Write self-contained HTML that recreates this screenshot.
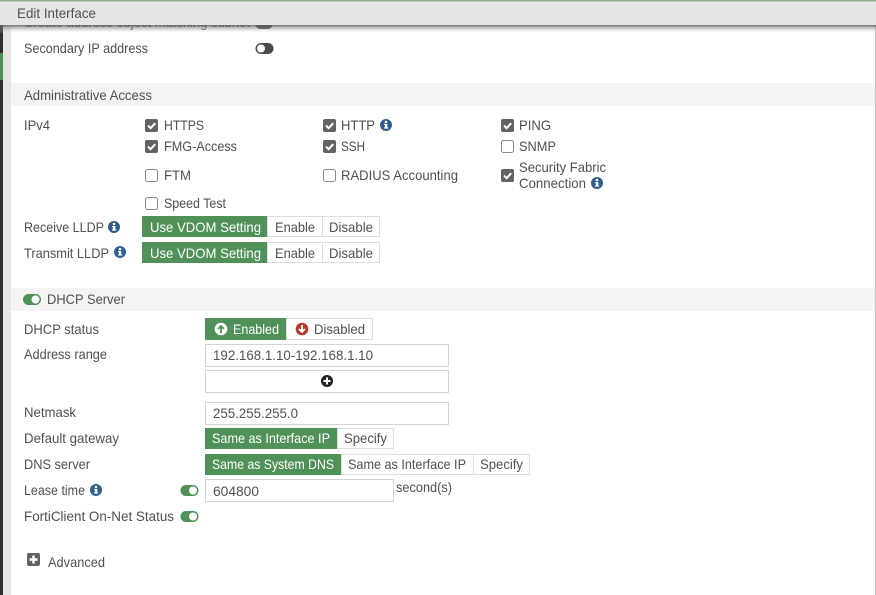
<!DOCTYPE html>
<html><head><meta charset="utf-8"><style>
html,body{margin:0;padding:0;width:876px;height:595px;overflow:hidden;background:#fff}
svg{display:block;filter:blur(.3px)}
text{font-family:"Liberation Sans",sans-serif;font-size:14px;fill:#505050}
.w{fill:#fff}
</style></head><body>
<svg width="876" height="595" viewBox="0 0 876 595" xmlns="http://www.w3.org/2000/svg">
<defs>
<linearGradient id="sh" x1="0" y1="0" x2="0" y2="1"><stop offset="0" stop-color="#555" stop-opacity=".85"/><stop offset=".35" stop-color="#888" stop-opacity=".45"/><stop offset="1" stop-color="#fff" stop-opacity="0"/></linearGradient>
<g id="on"><rect x="0" y="0" width="18" height="11" rx="5.500" fill="#4f9158"/><circle cx="12.500" cy="5.500" r="4" fill="#fff"/></g>
<g id="ck"><rect x="0" y="0" width="13" height="13" rx="2" fill="#636363"/><path d="M3 6.600l2.600 2.600L10.200 4.200" fill="none" stroke="#fff" stroke-width="2"/></g>
<g id="un"><rect x=".5" y=".5" width="12" height="12" rx="2" fill="#fff" stroke="#8a8a8a"/></g>
<g id="in"><circle cx="0" cy="0" r="6" fill="#2f5f8f"/><rect x="-1.100" y="-1" width="2.400" height="4.400" fill="#fff"/><rect x="-2" y="2.400" width="4.200" height="1.200" fill="#fff"/><rect x="-2" y="-1" width="2" height="1.100" fill="#fff"/><circle cx="0" cy="-3" r="1.300" fill="#fff"/></g>
</defs>

<!-- left edge -->
<rect x="0" y="0" width="3" height="595" fill="#2e2e2e"/>
<rect x="0" y="53" width="3" height="27" fill="#4f9158"/>
<rect x="3" y="0" width="8" height="595" fill="#e6e6e6"/>
<rect x="875" y="25" width="1" height="570" fill="#c4c4c4"/>

<!-- clipped row -->
<text x="24" y="27" textLength="226" lengthAdjust="spacingAndGlyphs" fill="#333">Create address object matching subnet</text>
<rect x="255" y="18" width="18" height="11" rx="5.500" fill="#444"/>

<!-- header -->
<rect x="0" y="25" width="876" height="9" fill="url(#sh)"/>
<rect x="0" y="0" width="876" height="25" fill="#e5e5e5"/>
<rect x="0" y="0" width="876" height="1.500" fill="#8fae92"/>
<text x="17" y="18" textLength="79" lengthAdjust="spacingAndGlyphs">Edit Interface</text>

<!-- secondary ip -->
<text x="24" y="53" textLength="124" lengthAdjust="spacingAndGlyphs">Secondary IP address</text>
<rect x="255.500" y="43" width="18" height="11" rx="5.500" fill="#4a4a4a"/><circle cx="261" cy="48.500" r="4" fill="#fff"/>

<!-- admin access -->
<rect x="11" y="83" width="864" height="23" fill="#f4f4f4"/>
<text x="24" y="100" textLength="128" lengthAdjust="spacingAndGlyphs">Administrative Access</text>
<text x="24" y="130" textLength="26" lengthAdjust="spacingAndGlyphs">IPv4</text>

<use href="#ck" x="145" y="119"/><text x="164" y="130" textLength="40" lengthAdjust="spacingAndGlyphs">HTTPS</text>
<use href="#ck" x="145" y="140"/><text x="164" y="151" textLength="73" lengthAdjust="spacingAndGlyphs">FMG-Access</text>
<use href="#un" x="145" y="169"/><text x="164" y="180" textLength="27" lengthAdjust="spacingAndGlyphs">FTM</text>
<use href="#un" x="145" y="197"/><text x="164" y="208" textLength="62" lengthAdjust="spacingAndGlyphs">Speed Test</text>

<use href="#ck" x="323" y="119"/><text x="341" y="130" textLength="34" lengthAdjust="spacingAndGlyphs">HTTP</text><use href="#in" x="386" y="125"/>
<use href="#ck" x="323" y="140"/><text x="341" y="151" textLength="24" lengthAdjust="spacingAndGlyphs">SSH</text>
<use href="#un" x="323" y="169"/><text x="341" y="180" textLength="117" lengthAdjust="spacingAndGlyphs">RADIUS Accounting</text>

<use href="#ck" x="501" y="119"/><text x="519" y="130" textLength="32" lengthAdjust="spacingAndGlyphs">PING</text>
<use href="#un" x="501" y="140"/><text x="519" y="151" textLength="37" lengthAdjust="spacingAndGlyphs">SNMP</text>
<use href="#ck" x="501" y="169"/><text x="519" y="172" textLength="87" lengthAdjust="spacingAndGlyphs">Security Fabric</text><text x="519" y="188" textLength="67" lengthAdjust="spacingAndGlyphs">Connection</text><use href="#in" x="597" y="183"/>

<!-- LLDP -->
<text x="24" y="232" textLength="80" lengthAdjust="spacingAndGlyphs">Receive LLDP</text><use href="#in" x="114" y="227"/>
<rect x="142" y="216" width="125" height="21" fill="#4f9158"/>
<rect x="267.500" y="216.500" width="55" height="20" fill="#fff" stroke="#ddd"/><rect x="322.500" y="216.500" width="57" height="20" fill="#fff" stroke="#ddd"/>
<text class="w" x="150" y="232" textLength="111" lengthAdjust="spacingAndGlyphs">Use VDOM Setting</text>
<text x="275" y="232" textLength="40" lengthAdjust="spacingAndGlyphs">Enable</text><text x="329" y="232" textLength="44" lengthAdjust="spacingAndGlyphs">Disable</text>

<text x="24" y="258" textLength="85" lengthAdjust="spacingAndGlyphs">Transmit LLDP</text><use href="#in" x="120" y="252"/>
<rect x="142" y="242" width="125" height="21" fill="#4f9158"/>
<rect x="267.500" y="242.500" width="55" height="20" fill="#fff" stroke="#ddd"/><rect x="322.500" y="242.500" width="57" height="20" fill="#fff" stroke="#ddd"/>
<text class="w" x="150" y="258" textLength="111" lengthAdjust="spacingAndGlyphs">Use VDOM Setting</text>
<text x="275" y="258" textLength="40" lengthAdjust="spacingAndGlyphs">Enable</text><text x="329" y="258" textLength="44" lengthAdjust="spacingAndGlyphs">Disable</text>

<!-- DHCP -->
<rect x="11" y="288" width="864" height="23" fill="#f4f4f4"/>
<use href="#on" x="23" y="294"/>
<text x="47" y="304" textLength="78" lengthAdjust="spacingAndGlyphs">DHCP Server</text>

<text x="24" y="334" textLength="75" lengthAdjust="spacingAndGlyphs">DHCP status</text>
<rect x="205" y="318" width="81" height="22" fill="#4f9158"/>
<rect x="286.500" y="318.500" width="86" height="21" fill="#fff" stroke="#ddd"/>
<circle cx="221" cy="329" r="6.300" fill="#fff"/><path d="M221 333v-7M218 329l3-3 3 3" fill="none" stroke="#4f9158" stroke-width="1.800"/>
<circle cx="302" cy="329" r="6.300" fill="#b8392e"/><path d="M302 325v7M299 329l3 3 3-3" fill="none" stroke="#fff" stroke-width="1.800"/>
<text class="w" x="233" y="334" textLength="46" lengthAdjust="spacingAndGlyphs">Enabled</text>
<text x="314" y="334" textLength="51" lengthAdjust="spacingAndGlyphs">Disabled</text>

<text x="24" y="359" textLength="83" lengthAdjust="spacingAndGlyphs">Address range</text>
<rect x="205.500" y="344.500" width="243" height="22" fill="#fff" stroke="#d4d4d4"/>
<text x="213" y="360" textLength="160" lengthAdjust="spacingAndGlyphs">192.168.1.10-192.168.1.10</text>
<rect x="205.500" y="370.500" width="243" height="22" fill="#fff" stroke="#d4d4d4"/>
<circle cx="327" cy="381" r="6" fill="#222"/><path d="M327 377.500v7M323.500 381h7" stroke="#fff" stroke-width="2"/>

<text x="24" y="417" textLength="52" lengthAdjust="spacingAndGlyphs">Netmask</text>
<rect x="205.500" y="402.500" width="243" height="22" fill="#fff" stroke="#d4d4d4"/>
<text x="213" y="418" textLength="85" lengthAdjust="spacingAndGlyphs">255.255.255.0</text>

<text x="24" y="443" textLength="95" lengthAdjust="spacingAndGlyphs">Default gateway</text>
<rect x="205" y="428" width="132" height="21" fill="#4f9158"/>
<rect x="337.500" y="428.500" width="56" height="20" fill="#fff" stroke="#ddd"/>
<text class="w" x="212" y="443" textLength="118" lengthAdjust="spacingAndGlyphs">Same as Interface IP</text>
<text x="344" y="443" textLength="43" lengthAdjust="spacingAndGlyphs">Specify</text>

<text x="24" y="469" textLength="66" lengthAdjust="spacingAndGlyphs">DNS server</text>
<rect x="205" y="454" width="136" height="21" fill="#4f9158"/>
<rect x="341.500" y="454.500" width="132" height="20" fill="#fff" stroke="#ddd"/>
<rect x="473.500" y="454.500" width="56" height="20" fill="#fff" stroke="#ddd"/>
<text class="w" x="212" y="469" textLength="122" lengthAdjust="spacingAndGlyphs">Same as System DNS</text>
<text x="348" y="469" textLength="118" lengthAdjust="spacingAndGlyphs">Same as Interface IP</text>
<text x="480" y="469" textLength="43" lengthAdjust="spacingAndGlyphs">Specify</text>

<text x="24" y="495" textLength="61" lengthAdjust="spacingAndGlyphs">Lease time</text><use href="#in" x="96" y="490"/>
<use href="#on" x="180.500" y="485"/>
<rect x="205.500" y="479.500" width="188" height="22" fill="#fff" stroke="#d4d4d4"/>
<text x="213" y="496" textLength="46" lengthAdjust="spacingAndGlyphs">604800</text>
<text x="396" y="492" textLength="56" lengthAdjust="spacingAndGlyphs">second(s)</text>

<text x="24" y="521" textLength="150" lengthAdjust="spacingAndGlyphs">FortiClient On-Net Status</text>
<use href="#on" x="180.500" y="511"/>

<rect x="27" y="553" width="13" height="13" rx="2" fill="#636363"/><path d="M33.500 555.500v8M29.500 559.500h8" stroke="#fff" stroke-width="2.400"/>
<text x="48" y="567" textLength="57" lengthAdjust="spacingAndGlyphs">Advanced</text>
</svg>
</body></html>
